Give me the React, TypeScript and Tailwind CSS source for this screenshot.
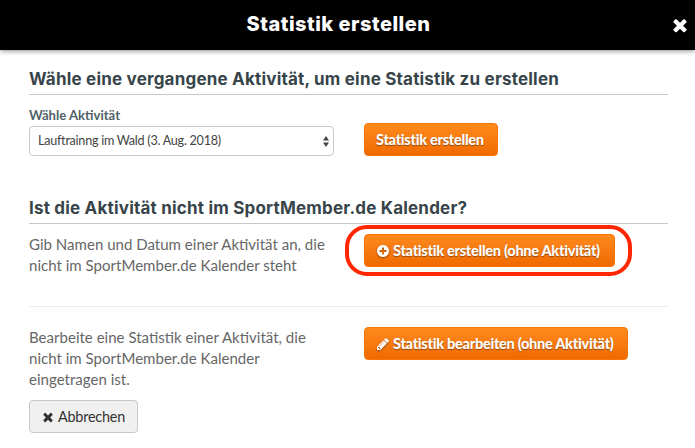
import React from 'react';

const ICONS = {
  times: 'M1490 1322q0 40-28 68l-136 136q-28 28-68 28t-68-28l-294-294-294 294q-28 28-68 28t-68-28l-136-136q-28-28-28-68t28-68l294-294-294-294q-28-28-28-68t28-68l136-136q28-28 68-28t68 28l294 294 294-294q28-28 68-28t68 28l136 136q28 28 28 68t-28 68l-294 294 294 294q28 28 28 68z',
  plus: 'M1344 960v-128q0-26-19-45t-45-19h-256v-256q0-26-19-45t-45-19h-128q-26 0-45 19t-19 45v256h-256q-26 0-45 19t-19 45v128q0 26 19 45t45 19h256v256q0 26 19 45t45 19h128q26 0 45-19t19-45v-256h256q26 0 45-19t19-45zm320-64q0 209-103 385.5t-279.5 279.5-385.5 103-385.5-103-279.5-279.5-103-385.5 103-385.5 279.5-279.5 385.5-103 385.5 103 279.5 279.5 103 385.5z',
  pencil: 'M491 1536l91-91-235-235-91 91v107h128v128h107zm523-928q0-22-22-22-10 0-17 7l-542 542q-7 7-7 17 0 22 22 22 10 0 17-7l542-542q7-7 7-17zm-54-192l416 416-832 832h-416v-416zm683 96q0 53-37 90l-166 166-416-416 166-165q36-38 90-38 53 0 91 38l235 234q37 39 37 91z',
};

function Icon({ name, className }: { name: keyof typeof ICONS, className?: string }) {
  return (
    <svg viewBox="0 0 1792 1792" fill="currentColor" fillRule="evenodd" className={`shrink-0 ${className ?? ''}`}>
      <path d={ICONS[name]} />
    </svg>
  );
}

function OrangeButton({ icon, className, children }: { icon?: keyof typeof ICONS, className: string, children: React.ReactNode }) {
  return (
    <button className={`flex h-[33px] items-center rounded-[4px] border border-[#f57406] bg-linear-to-b from-[#ff8a1c] to-[#f06a00] pl-[11px] text-[14.5px] font-black tracking-[-0.27px] whitespace-nowrap text-white text-shadow-[0_1px_1px_rgba(0,0,0,0.4)] ${className}`}>
      {icon && <Icon name={icon} className="mr-[3px] size-[14px] drop-shadow-[0_1px_1px_rgba(0,0,0,0.4)]" />}
      {children}
    </button>
  );
}

function Heading({ children }: { children: React.ReactNode }) {
  return (
    <h3 className="h-[30px] border-b border-[#c8c8c8] font-['Inter',sans-serif] text-[17px] leading-[29px] font-bold tracking-[0.2px] whitespace-nowrap text-[#37444a]">
      {children}
    </h3>
  );
}

export default function App() {
  return (
    <div className="h-[448px] w-[695px] overflow-hidden bg-white font-['Lato',sans-serif] text-[15.05px] leading-[21px] text-[#666]">
      <header className="grid h-[50px] grid-cols-[1fr_auto_1fr] items-center bg-black text-white shadow-[0_1px_5px_rgba(0,0,0,0.45)]">
        <h1 className="col-start-2 ml-[-18px] font-['Inter',sans-serif] text-[20px] leading-[48px] font-extrabold tracking-[0.5px]">
          <span className="block h-[50px]">Statistik erstellen</span>
        </h1>
        <button className="mr-[5px] justify-self-end">
          <Icon name="times" className="size-[20px]" />
        </button>
      </header>

      <main className="pt-[15px] pr-[27px] pl-[29px]">
        <Heading>Wähle eine vergangene Aktivität, um eine Statistik zu erstellen</Heading>

        <div className="flex h-[99px] items-start">
          <div className="w-[335px] pt-[10px]">
            <label className="block text-[13.1px] leading-[21px] font-bold text-[#4f5f67]">Wähle Aktivität</label>
            <div className="flex h-[30px] w-[305px] items-center justify-between rounded-[4px] border border-[#c8c8c8] pr-[4px] pl-[8px] text-[12.6px] leading-[28px] tracking-[-0.26px] text-[#444]">
              <span>Lauftrainng im Wald (3. Aug. 2018)</span>
              <svg viewBox="0 0 6 11" className="h-[11px] w-[6px]" fill="#444">
                <path d="M3 0L6 4.5H0zM3 11L0 6.5H6z" />
              </svg>
            </div>
          </div>
          <OrangeButton className="mt-[28px] w-[134px]">Statistik erstellen</OrangeButton>
        </div>

        <Heading>Ist die Aktivität nicht im SportMember.de Kalender?</Heading>

        <div className="flex h-[82px] items-start">
          <p className="w-[335px] pt-[10px] whitespace-nowrap">
            Gib Namen und Datum einer Aktivität an, die
            <br />
            nicht im SportMember.de Kalender steht
          </p>
          {/* highlighted action */}
          <div className="mt-[1px] ml-[-19px] rounded-[22px] border-4 border-[#ff2600] pt-[5px] pr-[13px] pb-[5px] pl-[15px]">
            <OrangeButton icon="plus" className="w-[251px]">Statistik erstellen (ohne Aktivität)</OrangeButton>
          </div>
        </div>

        <hr className="border-[#eee]" />

        <div className="flex h-[93px] items-start">
          <p className="w-[335px] pt-[20px] whitespace-nowrap">
            Bearbeite eine Statistik einer Aktivität, die
            <br />
            nicht im SportMember.de Kalender
            <br />
            eingetragen ist.
          </p>
          <OrangeButton icon="pencil" className="mt-[20px] w-[264px]">Statistik bearbeiten (ohne Aktivität)</OrangeButton>
        </div>

        <button className="flex h-[33px] w-[109px] items-center rounded-[4px] border border-[#c8c8c8] bg-[#f0f0f0] pl-[11px] text-[14.4px] tracking-[-0.2px] text-[#333]">
          <Icon name="times" className="mr-[3px] size-[14px]" />
          Abbrechen
        </button>
      </main>
    </div>
  );
}
